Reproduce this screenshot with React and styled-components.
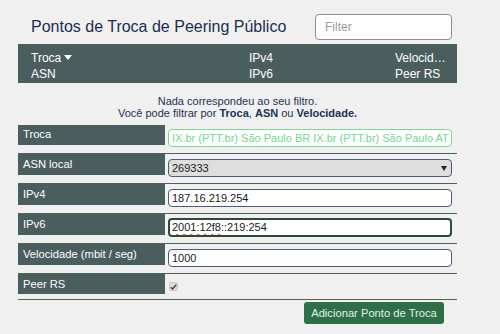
import React from 'react';
import styled, { createGlobalStyle } from 'styled-components';

const GlobalStyle = createGlobalStyle`
  html, body {
    margin: 0;
    padding: 0;
    background: #f0f0f0;
    font-family: "Liberation Sans", Arial, sans-serif;
  }
`;

const Page = styled.div`
  width: 500px;
  height: 334px;
  padding: 14px 0 0 18px;
  box-sizing: border-box;
  overflow: hidden;
`;

const TopBar = styled.div`
  display: flex;
  align-items: center;
  justify-content: space-between;
  width: 434px;
  height: 26px;
  margin-bottom: 4px;
`;

const Title = styled.h1`
  margin: 0 0 0 13px;
  font-size: 16px;
  font-weight: 400;
  color: #1d2d4e;
`;

const FilterInput = styled.input`
  width: 137px;
  height: 26px;
  box-sizing: border-box;
  border: 1px solid #8a8f96;
  border-radius: 4px;
  background: #fff;
  padding: 0 9px;
  font-family: inherit;
  font-size: 12px;
  color: #333;
  outline: none;

  &::placeholder {
    color: #9a9a9a;
  }
`;

const HeaderBar = styled.div`
  display: grid;
  grid-template-columns: 218px 146px 1fr;
  width: 439px;
  height: 39px;
  box-sizing: border-box;
  padding: 7px 11px 0 13px;
  background: #4b5e5e;
  color: #fff;
  font-size: 12px;
  line-height: 14px;
`;

const HeaderCell = styled.div`
  white-space: nowrap;
  overflow: hidden;
  text-overflow: ellipsis;
`;

const Caret = styled.span`
  display: inline-block;
  margin-left: 3px;
  width: 0;
  height: 0;
  border-left: 4px solid transparent;
  border-right: 4px solid transparent;
  border-top: 5px solid #fff;
  vertical-align: 2px;
`;

const Notice = styled.div`
  width: 439px;
  margin: 12px 0 6px;
  text-align: center;
  font-size: 11px;
  line-height: 12px;
  color: #1e3252;
`;

const Form = styled.div`
  width: 439px;
`;

const Row = styled.div`
  display: flex;
  align-items: flex-start;
  height: ${(p) => p.$height || 29}px;
  border-bottom: 1px solid #4d6354;
`;

const Label = styled.div`
  width: 147px;
  height: ${(p) => p.$height || 21}px;
  flex: none;
  box-sizing: border-box;
  padding: ${(p) => p.$padTop || 4}px 0 0 5px;
  background: #4b5e5e;
  color: #fff;
  font-size: 11.2px;
  line-height: 13px;
  white-space: nowrap;
`;

const fieldColors = {
  green: { border: '#74dd93', color: '#6fd98f', width: 1, bg: '#fff' },
  normal: { border: '#4b5a78', color: '#1b1b1b', width: 1, bg: '#fff' },
  focused: { border: '#2d4a36', color: '#1b1b1b', width: 2, bg: '#fff' },
  select: { border: '#4b5a78', color: '#1b1b1b', width: 1, bg: '#dedede' },
};

const Field = styled.div`
  position: relative;
  margin: ${(p) => p.$top || 5}px 0 0 3px;
  width: 284px;
  height: ${(p) => p.$h || 18}px;
  box-sizing: border-box;
  border: ${(p) => fieldColors[p.$kind].width}px solid ${(p) => fieldColors[p.$kind].border};
  border-radius: 4px;
  background: ${(p) => fieldColors[p.$kind].bg};
  color: ${(p) => fieldColors[p.$kind].color};
  padding: 0 ${(p) => (p.$kind === 'focused' ? 2 : 3)}px;
  font-size: 11px;
  line-height: ${(p) => (p.$kind === 'focused' ? 15 : 16)}px;
  white-space: nowrap;
  overflow: hidden;
`;

const SelectArrow = styled.span`
  position: absolute;
  right: 4px;
  top: 6px;
  width: 0;
  height: 0;
  border-left: 3px solid transparent;
  border-right: 3px solid transparent;
  border-top: 5px solid #222;
`;

const Spell = styled.span`
  text-decoration: underline wavy #e04848;
  text-decoration-thickness: 1px;
  text-underline-offset: 2px;
`;

const CheckBox = styled.span`
  display: inline-flex;
  align-items: center;
  justify-content: center;
  margin: 8px 0 0 4px;
  width: 9px;
  height: 9px;
  border-radius: 2px;
  background: #dcdcdc;
  border: 1px solid #c8c8c8;
  box-sizing: border-box;
`;

const Actions = styled.div`
  display: flex;
  justify-content: flex-end;
  width: 439px;
  padding-top: 2px;
  padding-right: 13px;
  box-sizing: border-box;
`;

const AddButton = styled.button`
  width: 140px;
  height: 22px;
  border: none;
  border-radius: 3px;
  background: #2f6f48;
  color: #dff3e6;
  font-family: inherit;
  font-size: 11.2px;
  padding: 0;
  cursor: pointer;
`;

const App = () => (
  <>
    <GlobalStyle />
    <Page>
      <TopBar>
        <Title>Pontos de Troca de Peering Público</Title>
        <FilterInput placeholder="Filter" />
      </TopBar>

      <HeaderBar>
        <HeaderCell>
          Troca<Caret />
        </HeaderCell>
        <HeaderCell>IPv4</HeaderCell>
        <HeaderCell>Velocidade</HeaderCell>
        <HeaderCell>ASN</HeaderCell>
        <HeaderCell>IPv6</HeaderCell>
        <HeaderCell>Peer RS</HeaderCell>
      </HeaderBar>

      <Notice>
        Nada correspondeu ao seu filtro.
        <br />
        Você pode filtrar por <b>Troca</b>, <b>ASN</b> ou <b>Velocidade.</b>
      </Notice>

      <Form>
        <Row $height={28}>
          <Label $height={20} $padTop={3}>Troca</Label>
          <Field $kind="green" $top={4}>
            IX.br (PTT.br) São Paulo BR IX.br (PTT.br) São Paulo AT
          </Field>
        </Row>
        <Row>
          <Label>ASN local</Label>
          <Field $kind="select">
            269333
            <SelectArrow />
          </Field>
        </Row>
        <Row>
          <Label>IPv4</Label>
          <Field $kind="normal">187.16.219.254</Field>
        </Row>
        <Row>
          <Label>IPv6</Label>
          <Field $kind="focused" $top={4} $h={19}>
            <Spell>2001:12f8</Spell>::219:254
          </Field>
        </Row>
        <Row>
          <Label>Velocidade (mbit / seg)</Label>
          <Field $kind="normal">1000</Field>
        </Row>
        <Row $height={25}>
          <Label $height={20}>Peer RS</Label>
          <CheckBox>
            <svg width="7" height="6" viewBox="0 0 7 6">
              <path d="M0.8 3.2 L2.6 5 L6.2 0.8" fill="none" stroke="#444" strokeWidth="1.4" />
            </svg>
          </CheckBox>
        </Row>
      </Form>

      <Actions>
        <AddButton>Adicionar Ponto de Troca</AddButton>
      </Actions>
    </Page>
  </>
);

export default App;
